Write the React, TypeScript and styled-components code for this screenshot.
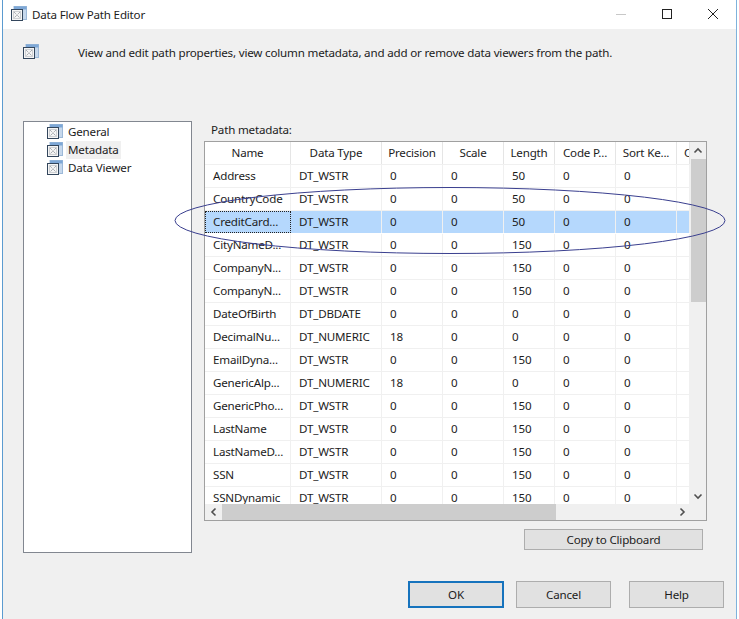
import React from "react";
import styled, { createGlobalStyle } from "styled-components";

const Global = createGlobalStyle`
  html, body { margin: 0; padding: 0; background: #fff; }
  * { box-sizing: border-box; }
`;

const Win = styled.div`
  position: relative;
  width: 735px;
  height: 619px;
  margin-left: 2px;
  border-left: 1px solid #5b9bd0;
  border-right: 1px solid #7fb2dc;
  background: #f0f0f0;
  font-family: "Noto Sans", sans-serif;
  font-size: 11.6px;
  letter-spacing: -0.19px;
  color: #1c1c1c;
  display: flex;
  flex-direction: column;
  overflow: hidden;
`;

const TitleBar = styled.div`
  height: 29px;
  flex: none;
  background: #fff;
  display: flex;
  align-items: center;
  padding: 0 0 1px 8px;
  gap: 5px;
`;
const TitleText = styled.span`
  flex: 1;
  white-space: nowrap;
`;
const WinBtn = styled.div`
  width: 46px;
  height: 28px;
  display: flex;
  align-items: center;
  justify-content: center;
`;
const Controls = styled.div`
  display: flex;
`;

const Desc = styled.div`
  height: 92px;
  flex: none;
  display: flex;
  padding: 15px 0 0 20px;
  gap: 39px;
`;
const DescText = styled.div`
  line-height: 20px;
  white-space: nowrap;
  margin-top: -1px;
`;

const Main = styled.div`
  flex: none;
  display: flex;
  padding-left: 20px;
  gap: 12px;
`;
const Tree = styled.div`
  width: 169px;
  height: 432px;
  background: #fff;
  border: 1px solid #828790;
  padding: 1px 0 0 23px;
  display: flex;
  flex-direction: column;
`;
const TreeItem = styled.div`
  height: 18px;
  display: flex;
  align-items: center;
  gap: 3px;
`;
const TreeLabel = styled.span<{ $sel?: boolean }>`
  padding: 0 2px;
  line-height: 18px;
  background: ${(p) => (p.$sel ? "#f0f0f0" : "transparent")};
`;

const Right = styled.div`
  width: 503px;
  display: flex;
  flex-direction: column;
`;
const PathLabel = styled.div`
  height: 20px;
  padding-left: 7px;
  line-height: 17px;
`;
const Grid = styled.div`
  width: 503px;
  height: 380px;
  border: 1px solid #a0a0a0;
  background: #fff;
  display: grid;
  grid-template-columns: 485px 16px;
  grid-template-rows: 362px 16px;
`;
const Cells = styled.div`
  overflow: hidden;
  width: 485px;
`;
const Row = styled.div<{ $sel?: boolean }>`
  display: grid;
  grid-template-columns: 86px 91px 61px 61px 51px 61px 61px 13px;
  height: 23px;
  border-bottom: 1px solid ${(p) => (p.$sel ? "#fff" : "#f0f0f0")};
  background: ${(p) => (p.$sel ? "#b5d8fd" : "#fff")};
`;
const Cell = styled.div<{ $focus?: boolean }>`
  padding: 0 0 0 8px;
  line-height: 22px;
  white-space: nowrap;
  overflow: hidden;
  border-right: 1px solid ${(p) => (p.$focus ? "transparent" : "#f0f0f0")};
  ${(p) => (p.$focus ? "outline: 1px dotted #222; outline-offset: -1px;" : "")}
`;
const HeadCell = styled.div<{ $clip?: boolean }>`
  text-align: ${(p) => (p.$clip ? "left" : "center")};
  padding-left: ${(p) => (p.$clip ? "7px" : "0")};
  line-height: 22px;
  white-space: nowrap;
  overflow: hidden;
  border-right: 1px solid #e5e5e5;
`;
const VBar = styled.div`
  grid-row: 1 / 2;
  grid-column: 2;
  background: #f0f0f0;
  display: flex;
  flex-direction: column;
  align-items: center;
`;
const VThumb = styled.div`
  width: 15px;
  height: 143px;
  background: #cdcdcd;
`;
const VSpace = styled.div`
  flex: 1;
`;
const ArrowBox = styled.div<{ $w?: number; $h?: number }>`
  width: ${(p) => p.$w ?? 15}px;
  height: ${(p) => p.$h ?? 17}px;
  flex: none;
  display: flex;
  align-items: center;
  justify-content: center;
`;
const HBar = styled.div`
  grid-row: 2;
  grid-column: 1;
  background: #f0f0f0;
  display: flex;
  align-items: center;
`;
const HThumb = styled.div`
  width: 334px;
  height: 16px;
  background: #cdcdcd;
`;
const Corner = styled.div`
  grid-row: 2;
  grid-column: 2;
  background: #f0f0f0;
`;
const CopyRow = styled.div`
  display: flex;
  justify-content: flex-end;
  padding: 8px 4px 0 0;
`;
const Btn = styled.button<{ $w?: number; $h?: number; $def?: boolean; $push?: number }>`
  width: ${(p) => p.$w ?? 95}px;
  height: ${(p) => p.$h ?? 27}px;
  margin: 0 0 0 ${(p) => p.$push ?? 0}px;
  padding: 0;
  border: ${(p) => (p.$def ? "2px solid #1673bd" : "1px solid #adadad")};
  background: #e1e1e1;
  font: inherit;
  letter-spacing: inherit;
  color: inherit;
`;
const Footer = styled.div`
  display: flex;
  justify-content: flex-end;
  gap: 12px;
  padding: 28px 12px 0 0;
`;
const Ellipse = styled.svg`
  position: absolute;
  left: -3px;
  top: 0;
  pointer-events: none;
`;

const AppIcon = () => (
  <svg width="16" height="16" viewBox="0 0 16 16" style={{ flex: "none" }}>
    <rect x="3" y="0.5" width="12.5" height="13" fill="#c6d8ec" stroke="#9db9d8" />
    <rect x="3" y="0.5" width="12.5" height="3" fill="#7da7d6" />
    <rect x="0.5" y="3.5" width="11" height="11" fill="#f5f5f5" stroke="#33465c" />
    <path d="M3 6l6 6M9 6l-6 6" stroke="#8a8f96" strokeWidth="1" strokeDasharray="1 1" />
    <rect x="2.5" y="5.5" width="7" height="7" fill="none" stroke="#a9adb3" strokeDasharray="1 1" />
  </svg>
);

const Chevron = ({ dir }: { dir: "u" | "d" | "l" | "r" }) => {
  const d = { u: "M1.5 6.5L5 3l3.5 3.5", d: "M1.5 3.5L5 7l3.5-3.5", l: "M6.5 1.5L3 5l3.5 3.5", r: "M3.5 1.5L7 5 3.5 8.5" }[dir];
  return (
    <svg width="10" height="10" viewBox="0 0 10 10">
      <path d={d} fill="none" stroke="#505050" strokeWidth="1.6" />
    </svg>
  );
};

const rows: [string, string, string, string, string][] = [
  ["Address", "DT_WSTR", "0", "0", "50"],
  ["CountryCode", "DT_WSTR", "0", "0", "50"],
  ["CreditCard...", "DT_WSTR", "0", "0", "50"],
  ["CityNameD...", "DT_WSTR", "0", "0", "150"],
  ["CompanyN...", "DT_WSTR", "0", "0", "150"],
  ["CompanyN...", "DT_WSTR", "0", "0", "150"],
  ["DateOfBirth", "DT_DBDATE", "0", "0", "0"],
  ["DecimalNu...", "DT_NUMERIC", "18", "0", "0"],
  ["EmailDyna...", "DT_WSTR", "0", "0", "150"],
  ["GenericAlp...", "DT_NUMERIC", "18", "0", "0"],
  ["GenericPho...", "DT_WSTR", "0", "0", "150"],
  ["LastName", "DT_WSTR", "0", "0", "150"],
  ["LastNameD...", "DT_WSTR", "0", "0", "150"],
  ["SSN", "DT_WSTR", "0", "0", "150"],
  ["SSNDynamic", "DT_WSTR", "0", "0", "150"],
];
const heads = ["Name", "Data Type", "Precision", "Scale", "Length", "Code P...", "Sort Ke..."];

export default function App() {
  return (
    <>
      <Global />
      <Win>
        <TitleBar>
          <AppIcon />
          <TitleText>Data Flow Path Editor</TitleText>
          <Controls>
            <WinBtn>
              <svg width="10" height="10"><path d="M0 5.5h10" stroke="#c8c8c8" /></svg>
            </WinBtn>
            <WinBtn>
              <svg width="10" height="10"><rect x=".5" y=".5" width="9" height="9" fill="none" stroke="#222" /></svg>
            </WinBtn>
            <WinBtn>
              <svg width="10" height="10"><path d="M0 0l10 10M10 0L0 10" stroke="#222" /></svg>
            </WinBtn>
          </Controls>
        </TitleBar>
        <Desc>
          <AppIcon />
          <DescText>View and edit path properties, view column metadata, and add or remove data viewers from the path.</DescText>
        </Desc>
        <Main>
          <Tree>
            <TreeItem><AppIcon /><TreeLabel>General</TreeLabel></TreeItem>
            <TreeItem><AppIcon /><TreeLabel $sel>Metadata</TreeLabel></TreeItem>
            <TreeItem><AppIcon /><TreeLabel>Data Viewer</TreeLabel></TreeItem>
          </Tree>
          <Right>
            <PathLabel>Path metadata:</PathLabel>
            <Grid>
              <Cells>
                <Row>
                  {heads.map((h) => (
                    <HeadCell key={h}>{h}</HeadCell>
                  ))}
                  <HeadCell $clip>C</HeadCell>
                </Row>
                {rows.map((r, i) => (
                  <Row key={i} $sel={i === 2}>
                    {r.map((c, j) => (
                      <Cell key={j} $focus={i === 2 && j === 0}>{c}</Cell>
                    ))}
                    <Cell>0</Cell>
                    <Cell>0</Cell>
                    <Cell />
                  </Row>
                ))}
              </Cells>
              <VBar>
                <ArrowBox><Chevron dir="u" /></ArrowBox>
                <VThumb />
                <VSpace />
                <ArrowBox><Chevron dir="d" /></ArrowBox>
              </VBar>
              <HBar>
                <ArrowBox $w={17} $h={16}><Chevron dir="l" /></ArrowBox>
                <HThumb />
                <VSpace />
                <ArrowBox $w={17} $h={16}><Chevron dir="r" /></ArrowBox>
              </HBar>
              <Corner />
            </Grid>
            <CopyRow>
              <Btn $w={179} $h={21}>Copy to Clipboard</Btn>
            </CopyRow>
          </Right>
        </Main>
        <Footer>
          <Btn $def $w={96}>OK</Btn>
          <Btn>Cancel</Btn>
          <Btn $push={6}>Help</Btn>
        </Footer>
        <Ellipse width="739" height="619" viewBox="0 0 739 619">
          <ellipse cx="450" cy="220.5" rx="275" ry="33" fill="none" stroke="#3a3f8f" strokeWidth="1" />
        </Ellipse>
      </Win>
    </>
  );
}
